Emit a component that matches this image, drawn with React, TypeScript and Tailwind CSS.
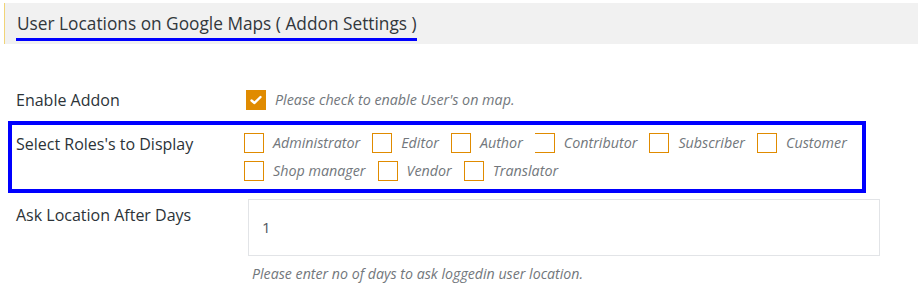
const roleRows = [
  ["Administrator", "Editor", "Author", "Contributor", "Subscriber", "Customer"],
  ["Shop manager", "Vendor", "Translator"],
];

function Box({ checked = false, open = false }: { checked?: boolean; open?: boolean }) {
  if (checked) {
    return (
      <span className="w-[20px] h-[20px] bg-[#e08b00] flex items-center justify-center shrink-0">
        <svg width="12" height="10" viewBox="0 0 12 10">
          <path d="M1.5 5.5 L4.5 8 L10.5 2" fill="none" stroke="#fff" strokeWidth="2.4" strokeLinecap="round" strokeLinejoin="round" />
        </svg>
      </span>
    );
  }
  return (
    <span
      className={
        open
          ? "w-[20px] h-[20px] border-y border-r border-[#e08b00] shrink-0"
          : "w-[20px] h-[20px] border border-[#e08b00] shrink-0"
      }
    />
  );
}

export default function App() {
  return (
    <div className="w-[918px] h-[300px] bg-white overflow-hidden text-[#2c3338] font-['Open_Sans',sans-serif]">
      <div className="pt-[3px]">
        {/* section header */}
        <div className="ml-[4px] h-[41px] bg-[#f1f1f1] border-l border-[#f1d477] pl-[11px] flex items-start">
          <h2 className="mt-[9px] text-[17.3px] leading-[24px] text-[#32373c] border-b-[3px] border-[#0000ff] pb-[2px] pl-[1px] whitespace-nowrap">
            User Locations on Google Maps ( Addon Settings )
          </h2>
        </div>

        {/* enable addon */}
        <div className="flex items-center mt-[44px] h-[24px]">
          <div className="w-[246px] pl-[16px] text-[16px]">Enable Addon</div>
          <Box checked />
          <span className="ml-[9px] text-[14.3px] italic text-[#72777c]">Please check to enable User's on map.</span>
        </div>

        {/* roles */}
        <div className="ml-[8px] mt-[9px] w-[858px] h-[72px] border-4 border-[#0000ff] flex pt-[7px]">
          <div className="w-[232px] pl-[4px] text-[16px] leading-[24px]">Select Roles's to Display</div>
          <div className="flex flex-col gap-[7px]">
            {roleRows.map((row, i) => (
              <div key={i} className="flex items-center h-[21px]">
                {row.map((r, j) => (
                  <div key={r} className={j === 0 ? "flex items-center" : "flex items-center ml-[12px]"}>
                    <Box open={r === "Contributor"} />
                    <span className="ml-[9px] text-[14.3px] italic text-[#72777c] whitespace-nowrap">{r}</span>
                  </div>
                ))}
              </div>
            ))}
          </div>
        </div>

        {/* ask location */}
        <div className="flex mt-[6px]">
          <div className="w-[248px] pl-[16px] pt-[4px] text-[16px] leading-[24px]">Ask Location After Days</div>
          <div className="flex flex-col">
            <div className="w-[632px] h-[57px] border border-[#e2e4e7] flex items-center pl-[13px] text-[15px] text-[#50575e]">
              1
            </div>
            <div className="mt-[7px] pl-[4px] text-[14.2px] italic text-[#72777c]">
              Please enter no of days to ask loggedin user location.
            </div>
          </div>
        </div>
      </div>
    </div>
  );
}
